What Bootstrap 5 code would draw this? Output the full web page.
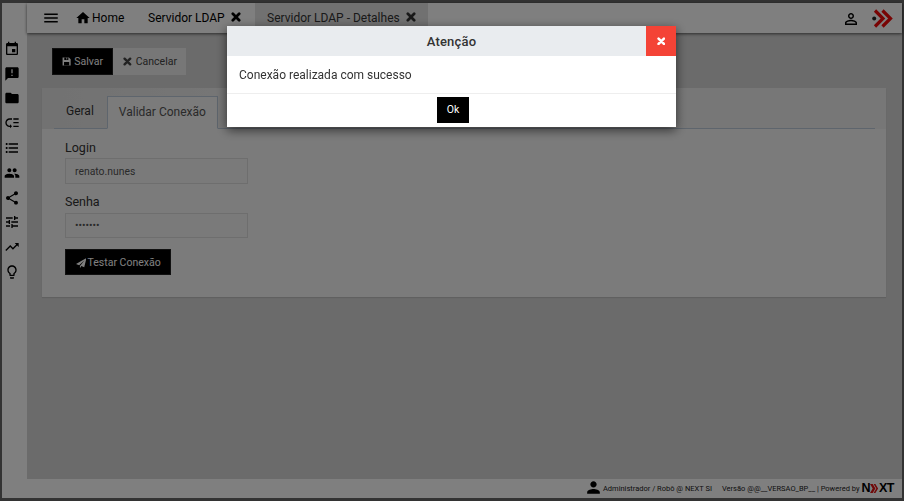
<!DOCTYPE html>
<html lang="pt-BR">
<head>
<meta charset="utf-8">
<title>Servidor LDAP</title>
<link href="https://cdn.jsdelivr.net/npm/bootstrap@5.3.0/dist/css/bootstrap.min.css" rel="stylesheet">
<style>
html,body{height:100%;overflow:hidden}
body{font-family:Roboto,"Liberation Sans",sans-serif;background:#666;color:#212529;font-size:12px}
.app-frame{height:501px;padding:3px 2px;}
.side-rail{width:25px;background:#fff;padding:36px 5px 0 0;flex:none}
.rail-item{height:24.8px;color:#000}
.rail-item svg{width:16px;height:16px;fill:#000}
.main-col{min-width:0;background:#d6d6d6}
.top-bar{height:30px;background:#fff;box-shadow:0 1px 3px rgba(0,0,0,.6);position:relative;z-index:2;font-size:12px}
.menu-btn{width:49px;padding-left:15px}
.menu-btn svg{width:18px;height:18px}
.tab-item{height:30px;font-size:12px;color:#000;white-space:nowrap}
.tab-home{width:72px}
.tab-home svg{width:16px;height:16px;margin:-1px 1px 0 -1px}
.tab-ldap{width:107px}
.tab-det{width:173px;background:#e2e2e2;color:#333;padding-left:12px}
.x-ico{width:10px;height:10px;margin:-2px 0 0 6px;fill:none;stroke:#000;stroke-width:3.3;stroke-linecap:round}
.tab-det .x-ico{stroke:#333}
.top-user{width:18px;height:18px;margin:1px 4px 0 0}
.logo-arrows{width:22px;height:19px;margin-top:1px}
.page-body{padding:15px 16px 0 15px;flex:1}
.act-row{padding-left:10px}
.act-btn{height:27px;font-size:10.5px;border-radius:0;padding:0 9px;display:inline-flex;align-items:center;gap:3px}
.btn-save{background:#000;color:#fff;border:1px solid #222;width:61px}
.btn-cancel{background:#eee;color:#444;border:0;width:73px;padding-left:10px}
.act-btn svg{width:12px;height:12px}
.btn-save svg{width:13px;height:13px;margin-right:0}
.btn-cancel svg{width:9px;height:9px;fill:none;stroke:#444;stroke-width:3.3;stroke-linecap:round;margin-right:1px}
.tab-panel{margin-top:13px;background:#f6f6f6;height:209px;box-shadow:0 1px 1px rgba(0,0,0,.1)}
.tab-head{height:41px;background:linear-gradient(90deg,#e4e4e4,#eee 25%,#efefef);padding:8px 11px 0 12px}
.tab-head .nav-link{font-size:12px;padding:0 13px 0 12px;height:33px;line-height:31px;border-radius:0;color:#333}
.tab-head .nav-tabs{border-bottom:1px solid #bccada;height:33px}
.tab-head .nav-link.active{background:#f6f6f6;color:#555;border:1px solid #bccada;border-bottom-color:#f6f6f6;padding:0 11px}
.tab-form{padding:9.8px 23px}
.fld-label{font-size:12.5px;color:#333;margin-bottom:2.5px;line-height:17px;display:block}
.fld-input{width:183px;height:25.5px;min-height:0;font-size:10.4px;border-radius:0;padding:0 9px;background:#f4f4f4;border:1px solid #ddd;color:#555;margin-bottom:9.67px}
.test-btn{background:#000;color:#fff;border:1px solid #222;border-radius:0;height:26px;width:106.4px;font-size:10.5px;padding:1px 0 0 10px;margin:1.2px 0 0 -.5px;display:inline-flex;align-items:center;justify-content:flex-start}
.test-btn svg{width:10.5px;height:10.5px;margin-right:1.5px}
.foot-bar{height:19px;background:#fff;color:#222;font-size:7.5px;padding-right:8px}
.foot-user{width:19px;height:19px;margin:-2px 0 0 0}
.foot-ver{margin-left:10px}
.next-logo{font-family:"Liberation Sans",sans-serif;font-size:12.5px;font-weight:700;color:#000;letter-spacing:-.5px;line-height:1;margin-left:2px}
.next-logo svg{width:9px;height:9px}
.backdrop-dim{background:#000;opacity:.5}
.alert-dialog{max-width:449px;width:449px;margin:26px 0 0 227px}
.alert-box{border:0;border-radius:0;box-shadow:0 3px 10px rgba(0,0,0,.6)}
.alert-head{height:30px;background:#e9ecef;border:0;border-radius:0;padding:0;position:relative;justify-content:center}
.alert-title{font-size:13px;font-weight:500;color:#333;letter-spacing:.2px;line-height:1}
.alert-close{position:absolute;right:0;top:0;width:30px;height:30px;background:#f44336;border:0;padding:0;display:flex;align-items:center;justify-content:center}
.alert-close svg{width:8.5px;height:8.5px;fill:none;stroke:#fff;stroke-width:3.6;stroke-linecap:round}
.alert-body{height:37px;padding:0 12px;font-size:12px;color:#333;display:flex;align-items:center}
.alert-foot{height:34px;padding:0 0 2px 2px;border-top:1px solid #eee;justify-content:center;border-radius:0;align-items:center}
.ok-btn{margin:0;width:32px;height:26px;padding:0 0 0 1px;background:#000;color:#fff;border:0;border-radius:0;font-size:10.5px}
</style>
</head>
<body>
<div class="app-frame d-flex">
  <aside class="side-rail d-flex flex-column align-items-center">
    <div class="rail-item"><svg viewBox="0 0 24 24"><path d="M17 12h-5v5h5v-5zM16 1v2H8V1H6v2H5c-1.11 0-1.99.9-1.99 2L3 19c0 1.1.89 2 2 2h14c1.1 0 2-.9 2-2V5c0-1.1-.9-2-2-2h-1V1h-2zm3 18H5V8h14v11z"/></svg></div>
    <div class="rail-item"><svg viewBox="0 0 24 24"><path d="M20 2H4c-1.1 0-1.99.9-1.99 2L2 22l4-4h14c1.1 0 2-.9 2-2V4c0-1.1-.9-2-2-2zm-7 9h-2V5h2v6zm0 4h-2v-2h2v2z"/></svg></div>
    <div class="rail-item"><svg viewBox="0 0 24 24"><path d="M10 4H4c-1.1 0-1.99.9-1.99 2L2 18c0 1.1.9 2 2 2h16c1.1 0 2-.9 2-2V8c0-1.1-.9-2-2-2h-8l-2-2z"/></svg></div>
    <div class="rail-item"><svg viewBox="0 0 24 24"><path d="M14 5h8v2h-8zm0 5.5h8v2h-8zm0 5.5h8v2h-8zM2 11.5C2 15.08 4.92 18 8.5 18H9v2l3-3-3-3v2h-.5C6.02 16 4 13.98 4 11.5S6.02 7 8.5 7H12V5H8.5C4.92 5 2 7.92 2 11.5z"/></svg></div>
    <div class="rail-item"><svg viewBox="0 0 24 24"><path d="M4 10.5c-.83 0-1.5.67-1.5 1.5s.67 1.5 1.5 1.5 1.5-.67 1.5-1.5-.67-1.5-1.5-1.5zm0-6c-.83 0-1.5.67-1.5 1.5S3.17 7.5 4 7.5 5.5 6.83 5.5 6 4.83 4.5 4 4.5zm0 12c-.83 0-1.5.68-1.5 1.5s.68 1.5 1.5 1.5 1.5-.68 1.5-1.5-.67-1.5-1.5-1.5zM7 19h14v-2H7v2zm0-6h14v-2H7v2zm0-8v2h14V5H7z"/></svg></div>
    <div class="rail-item"><svg viewBox="0 0 24 24"><path d="M16 11c1.66 0 2.99-1.34 2.99-3S17.66 5 16 5c-1.66 0-3 1.34-3 3s1.34 3 3 3zm-8 0c1.66 0 2.99-1.34 2.99-3S9.66 5 8 5C6.34 5 5 6.34 5 8s1.34 3 3 3zm0 2c-2.33 0-7 1.17-7 3.5V19h14v-2.5c0-2.33-4.67-3.5-7-3.5zm8 0c-.29 0-.62.02-.97.05 1.16.84 1.97 1.97 1.97 3.45V19h6v-2.5c0-2.33-4.67-3.5-7-3.5z"/></svg></div>
    <div class="rail-item"><svg viewBox="0 0 24 24"><path d="M18 16.08c-.76 0-1.44.3-1.96.77L8.91 12.7c.05-.23.09-.46.09-.7s-.04-.47-.09-.7l7.05-4.11c.54.5 1.25.81 2.04.81 1.66 0 3-1.34 3-3s-1.34-3-3-3-3 1.34-3 3c0 .24.04.47.09.7L8.04 9.81C7.5 9.31 6.79 9 6 9c-1.66 0-3 1.34-3 3s1.34 3 3 3c.79 0 1.5-.31 2.04-.81l7.12 4.16c-.05.21-.08.43-.08.65 0 1.61 1.31 2.92 2.92 2.92 1.61 0 2.92-1.31 2.92-2.92s-1.31-2.92-2.92-2.92z"/></svg></div>
    <div class="rail-item"><svg viewBox="0 0 24 24"><path d="M3 17v2h6v-2H3zM3 5v2h10V5H3zm10 16v-2h8v-2h-8v-2h-2v6h2zM7 9v2H3v2h4v2h2V9H7zm14 4v-2H11v2h10zm-6-4h2V7h4V5h-4V3h-2v6z"/></svg></div>
    <div class="rail-item"><svg viewBox="0 0 24 24"><path d="M16 6l2.29 2.29-4.88 4.88-4-4L2 16.59 3.41 18l6-6 4 4 6.3-6.29L22 12V6z"/></svg></div>
    <div class="rail-item"><svg viewBox="0 0 24 24"><path d="M9 21c0 .55.45 1 1 1h4c.55 0 1-.45 1-1v-1H9v1zm3-19C8.14 2 5 5.14 5 9c0 2.38 1.19 4.47 3 5.74V17c0 .55.45 1 1 1h6c.55 0 1-.45 1-1v-2.26c1.81-1.27 3-3.36 3-5.74 0-3.86-3.14-7-7-7zm2.85 11.1l-.85.6V16h-4v-2.3l-.85-.6C7.8 12.16 7 10.63 7 9c0-2.76 2.24-5 5-5s5 2.24 5 5c0 1.63-.8 3.16-2.15 4.1z"/></svg></div>
  </aside>
  <div class="main-col flex-grow-1 d-flex flex-column">
    <header class="top-bar d-flex align-items-center">
      <div class="menu-btn d-flex align-items-center"><svg viewBox="0 0 24 24"><path d="M3 18h18v-2H3v2zm0-5h18v-2H3v2zm0-7v2h18V6H3z"/></svg></div>
      <div class="tab-item tab-home d-flex align-items-center"><svg viewBox="0 0 24 24"><path d="M10 20v-6h4v6h5v-8h3L12 3 2 12h3v8z"/></svg>Home</div>
      <div class="tab-item tab-ldap d-flex align-items-center">Servidor LDAP<svg class="x-ico" viewBox="0 0 12 12"><path d="M2.2 2.2l7.6 7.6M9.8 2.2l-7.6 7.6"/></svg></div>
      <div class="tab-item tab-det d-flex align-items-center">Servidor LDAP - Detalhes<svg class="x-ico" viewBox="0 0 12 12"><path d="M2.2 2.2l7.6 7.6M9.8 2.2l-7.6 7.6"/></svg></div>
      <div class="ms-auto d-flex align-items-center gap-2 pe-2">
        <svg class="top-user" viewBox="0 0 24 24"><path d="M12 5.9c1.16 0 2.1.94 2.1 2.1s-.94 2.1-2.1 2.1S9.9 9.16 9.9 8s.94-2.1 2.1-2.1m0 9c2.97 0 6.1 1.46 6.1 2.1v1.1H5.9V17c0-.64 3.13-2.1 6.1-2.1M12 4C9.79 4 8 5.79 8 8s1.79 4 4 4 4-1.79 4-4-1.79-4-4-4zm0 9c-2.67 0-8 1.34-8 4v3h16v-3c0-2.66-5.33-4-8-4z"/></svg>
        <svg class="logo-arrows" viewBox="0 0 22 19"><path d="M3 1.5 11 9.5 3 17.5M10.5 1.5 18.5 9.5 10.5 17.5" fill="none" stroke="#f00808" stroke-width="3.2"/><circle cx="2.2" cy="9.5" r="2" fill="#222"/></svg>
      </div>
    </header>
    <main class="page-body d-flex flex-column">
      <div class="d-flex act-row">
        <button type="button" class="btn act-btn btn-save"><svg viewBox="0 0 16 16" fill="#fff"><path d="M1 1h11l3 3v11H1zM4 1.5v4h7v-4h-2v3H7.5v-3zM3.5 9v5.5h9V9z" fill-rule="evenodd"/></svg>Salvar</button>
        <button type="button" class="btn act-btn btn-cancel"><svg viewBox="0 0 12 12"><path d="M2.2 2.2l7.6 7.6M9.8 2.2l-7.6 7.6"/></svg>Cancelar</button>
      </div>
      <section class="tab-panel">
        <div class="tab-head">
          <ul class="nav nav-tabs">
            <li class="nav-item"><a class="nav-link border-0" href="#">Geral</a></li>
            <li class="nav-item"><a class="nav-link active" href="#">Validar Conexão</a></li>
          </ul>
        </div>
        <form class="tab-form">
          <label class="fld-label" for="login">Login</label>
          <input id="login" class="form-control fld-input" value="renato.nunes">
          <label class="fld-label" for="senha">Senha</label>
          <input id="senha" class="form-control fld-input" type="password" value="1234567">
          <button type="button" class="btn test-btn"><svg viewBox="0 0 16 16" fill="#fff"><path d="M16 0 12.5 14 8.2 12.2 6 15.5V12l7-8.5L4.8 11 0 9z"/></svg>Testar Conexão</button>
        </form>
      </section>
    </main>
    <footer class="foot-bar d-flex align-items-center justify-content-end">
      <svg class="foot-user" viewBox="0 0 24 24"><path d="M12 12c2.21 0 4-1.79 4-4s-1.79-4-4-4-4 1.79-4 4 1.79 4 4 4zm0 2c-2.67 0-8 1.34-8 4v2h16v-2c0-2.66-5.33-4-8-4z"/></svg>
      <span>Administrador / Robô @ NEXT SI</span>
      <span class="foot-ver">Versão @@__VERSAO_BP__ | Powered by</span>
      <span class="next-logo d-inline-flex align-items-center">N<svg viewBox="0 0 10 10"><path d="M0 0h3l3 5-3 5H0l3-5zM4 0h2l3 5-3 5H4l3-5z" fill="#e01212"/></svg>XT</span>
    </footer>
  </div>
</div>
<div class="modal-backdrop show backdrop-dim"></div>
<div class="modal d-block" tabindex="-1">
  <div class="modal-dialog alert-dialog">
    <div class="modal-content alert-box">
      <div class="modal-header alert-head">
        <h5 class="modal-title alert-title">Atenção</h5>
        <button type="button" class="alert-close" aria-label="Fechar"><svg viewBox="0 0 12 12"><path d="M2.2 2.2l7.6 7.6M9.8 2.2l-7.6 7.6"/></svg></button>
      </div>
      <div class="modal-body alert-body">Conexão realizada com sucesso</div>
      <div class="modal-footer alert-foot"><button type="button" class="btn ok-btn">Ok</button></div>
    </div>
  </div>
</div>
<script src="https://cdn.jsdelivr.net/npm/bootstrap@5.3.0/dist/js/bootstrap.bundle.min.js"></script>
</body>
</html>
